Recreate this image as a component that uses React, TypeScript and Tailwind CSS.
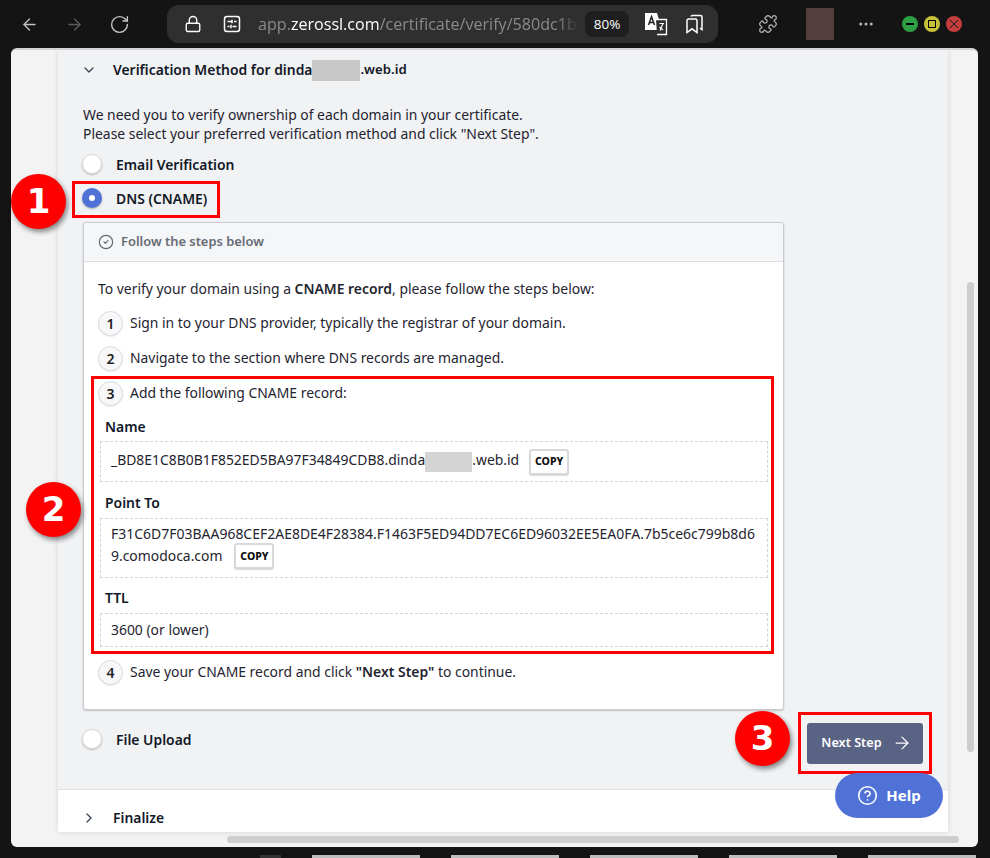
import { ArrowLeft, ArrowRight, ChevronDown, ChevronRight, CircleCheck, CircleHelp, Lock, MoreHorizontal, Puzzle, RotateCw } from "lucide-react"

const font = "font-['Noto_Sans',sans-serif]"

function Radio({ checked }: { checked?: boolean }) {
  return checked ? (
    <div className="w-5 h-5 rounded-full bg-[#4f72d6] shadow-[0_1px_2px_rgba(0,0,0,0.3)] flex items-center justify-center">
      <div className="w-[6px] h-[6px] rounded-full bg-white" />
    </div>
  ) : (
    <div className="w-5 h-5 rounded-full bg-white border border-[#dcdcdc] shadow-[0_1px_2px_rgba(0,0,0,0.25)]" />
  )
}

function MethodRow({ label, checked, className }: { label: string; checked?: boolean; className?: string }) {
  return (
    <div className={`flex items-center gap-[14px] ${className ?? ""}`}>
      <Radio checked={checked} />
      <span className="pt-[2px] text-[13.9px] font-semibold text-[#111827]">{label}</span>
    </div>
  )
}

function Step({ n, children, className }: { n: number; children: React.ReactNode; className?: string }) {
  return (
    <div className={`flex items-center gap-[7px] h-[25px] ${className ?? ""}`}>
      <div className="w-[25px] h-[25px] rounded-full bg-[#f8f8fa] border border-[#d9dbe0] shadow-[0_1px_1px_rgba(0,0,0,0.08)] flex items-center justify-center text-[14px] font-semibold text-[#222]">
        {n}
      </div>
      <span className="text-[13.92px] text-[#1f2430]">{children}</span>
    </div>
  )
}

function CopyButton({ className }: { className?: string }) {
  return (
    <span className={`inline-flex items-center justify-center shrink-0 w-10 h-[26px] rounded-[3px] bg-white border-2 border-[#d8d8dc] shadow-[0_1px_1px_rgba(0,0,0,0.15)] text-[10.5px] font-extrabold text-[#111] ${className ?? ""}`}>
      COPY
    </span>
  )
}

function Badge({ n, className }: { n: number; className: string }) {
  return (
    <div className={`absolute w-[55px] h-[55px] rounded-full bg-[#fe0000] shadow-[2px_3px_5px_rgba(0,0,0,0.45)] flex items-center justify-center text-white text-[34px] font-bold font-['DejaVu_Sans',sans-serif] ${className}`}>
      {n}
    </div>
  )
}

function BrowserBar() {
  return (
    <div className="h-[48px] shrink-0 flex items-center text-[#d8d8d8]">
      <ArrowLeft className="ml-[20px] w-[19px] h-[19px] text-[#c4c4c4]" strokeWidth={1.6} />
      <ArrowRight className="ml-[26px] w-[19px] h-[19px] text-[#5c5c5c]" strokeWidth={1.6} />
      <RotateCw className="ml-[25px] w-[21px] h-[21px] text-[#c4c4c4]" strokeWidth={1.6} />
      <div className="ml-[37px] w-[551px] h-[38px] rounded-[12px] bg-[#2f2f2f] flex items-center">
        <Lock className="ml-[17px] w-[18px] h-[18px] text-white" strokeWidth={1.8} />
        <svg className="ml-[21px] w-[18px] h-[18px]" viewBox="0 0 18 18" fill="none" stroke="#fff" strokeWidth="1.5">
          <rect x="1.5" y="1.5" width="15" height="15" rx="2.5" />
          <path d="M4.5 6.5h4M11 6.5h2.5M4.5 11.5h2M9.5 11.5h4M9 4.8v3.4M8 9.8v3.4" />
        </svg>
        <div className="ml-[17px] w-[320px] overflow-hidden whitespace-nowrap text-[16.1px] text-[#8a8a8a] font-['Open_Sans',sans-serif] [mask-image:linear-gradient(to_right,black_94%,transparent)]">
          app.<span className="text-white">zerossl.com</span>/certificate/verify/580dc1b
        </div>
        <div className="ml-[7px] w-[44px] h-[26px] rounded-[8px] bg-[#1e1e1e] flex items-center justify-center text-[13.5px] text-white font-['Open_Sans',sans-serif]">
          80%
        </div>
        <svg className="ml-[15px] w-[24px] h-[24px]" viewBox="0 0 24 24">
          <path d="M1 1h12l5 17H1z" fill="#fff" />
          <path d="M12 7.5h10.5v15H13" fill="#2f2f2f" stroke="#fff" strokeWidth="1.3" />
          <path d="M4.5 13L7.5 4.8L10.5 13M5.5 10.5h4" fill="none" stroke="#222" strokeWidth="1.5" />
          <path d="M15.5 11.5h4.5M19 11.5l-3 7M15.5 15l3.5 3" fill="none" stroke="#fff" strokeWidth="1.1" />
        </svg>
        <svg className="ml-[18px] w-[18px] h-[20px]" viewBox="0 0 18 20" fill="none" stroke="#fff" strokeWidth="1.5">
          <path d="M1 6.5a1.5 1.5 0 0 1 1.5-1.5h7A1.5 1.5 0 0 1 11 6.5V18.5L6 14.8L1 18.5z" />
          <path d="M5 2.5a1.5 1.5 0 0 1 1.3-1h8.2A1.5 1.5 0 0 1 16 3v12.5l-2-1.4" />
        </svg>
      </div>
      <Puzzle className="ml-[40px] w-[20px] h-[20px] text-[#b5b5b5]" strokeWidth={1.5} />
      <div className="ml-[28px] w-[28px] h-[32px] bg-[#543d3d]" />
      <MoreHorizontal className="ml-[23px] w-[18px] h-[18px] text-[#b5b5b5]" strokeWidth={2} />
      <div className="ml-[27px] flex items-center gap-[6px]">
        <div className="w-4 h-4 rounded-full bg-[#2ea043] flex items-center justify-center">
          <div className="w-2 h-[1.5px] bg-black" />
        </div>
        <div className="w-4 h-4 rounded-full bg-[#c9c23b] flex items-center justify-center">
          <div className="w-2 h-2 border border-black" />
        </div>
        <div className="w-4 h-4 rounded-full bg-[#c43d3d] flex items-center justify-center text-[#1b1b1b]">
          <svg className="w-2 h-2" viewBox="0 0 8 8" stroke="currentColor" strokeWidth="1">
            <path d="M0 0l8 8M8 0L0 8" />
          </svg>
        </div>
      </div>
    </div>
  )
}

function CnameBox() {
  return (
    <div className="ml-[25px] w-[701px] h-[488px] shrink-0 rounded-[3px] bg-white border border-[#c9cbd0] shadow-[0_1px_2px_rgba(0,0,0,0.2)] overflow-hidden">
      <div className="h-[39px] bg-[#f5f6f8] border-b border-[#dcdee2] flex items-center gap-[7px] px-[14px]">
        <CircleCheck className="w-4 h-4 text-[#666b75]" strokeWidth={1.8} />
        <span className="text-[12.9px] font-semibold text-[#666b75]">Follow the steps below</span>
      </div>
      <div className="pl-[14px] pr-[14px] pt-[17px] text-[13.92px] text-[#1f2430]">
        <p className="h-[20px] leading-[20px]">
          To verify your domain using a <b className="font-semibold">CNAME record</b>, please follow the steps below:
        </p>
        <Step n={1} className="mt-[12px]">Sign in to your DNS provider, typically the registrar of your domain.</Step>
        <Step n={2} className="mt-[10px]">Navigate to the section where DNS records are managed.</Step>
        <Step n={3} className="mt-[10px]">Add the following CNAME record:</Step>

        <div className="ml-[2px] w-[668px]">
          <div className="mt-[11px] pl-[5px] h-[20px] leading-[20px] font-semibold text-[#111827]">Name</div>
          <div className="mt-[4px] h-[41px] border border-dashed border-[#d4d4d4] pl-[10px] flex items-center">
            <span className="pb-[2px]">_BD8E1C8B0B1F852ED5BA97F34849CDB8.dinda</span>
            <span className="w-[47px] h-[20px] bg-[#d4d4d4]" />
            <span className="pb-[2px]">.web.id</span>
            <CopyButton className="ml-[10px]" />
          </div>
          <div className="mt-[11px] pl-[5px] h-[20px] leading-[20px] font-semibold text-[#111827]">Point To</div>
          <div className="mt-[5px] h-[60px] border border-dashed border-[#d4d4d4] px-[10px] pt-[4px] leading-[22px]">
            <div className="whitespace-nowrap text-[13.98px]">F31C6D7F03BAA968CEF2AE8DE4F28384.F1463F5ED94DD7EC6ED96032EE5EA0FA.7b5ce6c799b8d6</div>
            <div className="flex items-center h-[22px]">
              <span>9.comodoca.com</span>
              <CopyButton className="ml-[12px]" />
            </div>
          </div>
          <div className="mt-[10px] pl-[5px] h-[20px] leading-[20px] font-semibold text-[#111827]">TTL</div>
          <div className="mt-[5px] h-[34px] border border-dashed border-[#d4d4d4] pl-[10px] flex items-center">3600 (or lower)</div>
        </div>

        <Step n={4} className="mt-[13px]">
          <span>
            Save your CNAME record and click <b className="font-semibold">"Next Step"</b> to continue.
          </span>
        </Step>
      </div>
    </div>
  )
}

export default function App() {
  return (
    <div className={`relative w-[990px] h-[858px] overflow-hidden bg-[#141414] flex flex-col ${font}`}>
      <BrowserBar />

      {/* page window */}
      <div className="ml-[11px] w-[967px] h-[799px] shrink-0 rounded-[6px] border-t-2 border-[#d4d4d6] bg-[#f3f3f3] flex flex-col overflow-hidden">
        <div className="flex-1 min-h-0 flex">
          <div className="w-[47px] shrink-0" />
          <div className="w-[890px] shrink-0 flex flex-col shadow-[0_0_6px_rgba(0,0,0,0.12)]">
            <div className="h-[740px] shrink-0 bg-[#f1f2f4] border-b border-[#dfe1e5] flex flex-col">
              <div className="h-[40px] shrink-0 flex items-center pl-[23px] text-[13.9px] font-semibold text-[#111827]">
                <ChevronDown className="w-[16px] h-[16px] text-[#3d4658]" strokeWidth={2} />
                <span className="ml-[16px]">Verification Method for dinda</span>
                <span className="w-[48px] h-[21px] bg-[#c8c8c8]" />
                <span className="text-[13.2px]">.web.id</span>
              </div>
              <p className="mt-[15px] ml-[25px] text-[13.92px] leading-[19px] text-[#1f2430]">
                We need you to verify ownership of each domain in your certificate.
                <br />
                Please select your preferred verification method and click "Next Step".
              </p>
              <MethodRow label="Email Verification" className="mt-[11px] ml-[24px] h-5" />
              <MethodRow label="DNS (CNAME)" checked className="mt-[14px] ml-[24px] h-5" />
              <div className="h-[14px] shrink-0" />
              <CnameBox />
              <div className="flex items-start justify-between mt-[13px] ml-[24px] mr-[25px]">
                <MethodRow label="File Upload" className="mt-[6px] h-5" />
                <button className="w-[116px] h-[41px] pl-[3px] pb-[1px] rounded-[3px] bg-[#596384] text-white text-[12.7px] font-semibold flex items-center justify-center gap-[10px]">
                  Next Step
                  <ArrowRight className="w-5 h-5" strokeWidth={1.5} />
                </button>
              </div>
            </div>
            <div className="flex-1 bg-white flex items-start pt-[18px] pl-[23px] text-[13.9px] font-semibold text-[#111827]">
              <ChevronRight className="mt-[2px] w-[16px] h-[16px] text-[#3d4658]" strokeWidth={2} />
              <span className="ml-[16px]">Finalize</span>
            </div>
          </div>
          {/* vertical scrollbar */}
          <div className="flex-1 pl-[19px] pt-[232px]">
            <div className="w-[7px] h-[470px] rounded-full bg-[#cdcdcd]" />
          </div>
        </div>
        {/* horizontal scrollbar */}
        <div className="h-[15px] shrink-0 pl-[216px] pt-[4px]">
          <div className="w-[732px] h-[7px] rounded-full bg-[#cdcdcd]" />
        </div>
      </div>

      {/* what shows of the taskbar below the window */}
      <div className="mt-[8px] h-[3px] flex pl-[260px] gap-[31px]">
        <div className="w-[21px] bg-[#333]" />
        <div className="w-[108px] bg-[#bdbdbd]" />
        <div className="w-[108px] bg-[#bdbdbd]" />
        <div className="w-[108px] bg-[#bdbdbd]" />
        <div className="w-[108px] bg-[#bdbdbd]" />
        <div className="w-[108px] bg-[#bdbdbd]" />
      </div>

      {/* annotations */}
      <div className="absolute left-[72px] top-[181px] w-[148px] h-[37px] border-[3px] border-[#fe0000]" />
      <div className="absolute left-[91px] top-[376px] w-[683px] h-[278px] border-[3px] border-[#fe0000]" />
      <div className="absolute left-[798px] top-[712px] w-[134px] h-[62px] border-[3px] border-[#fe0000]" />
      <Badge n={1} className="left-[11px] top-[174px]" />
      <Badge n={2} className="left-[26px] top-[482px]" />
      <Badge n={3} className="left-[735px] top-[711px]" />

      <button className="absolute left-[835px] top-[773px] w-[108px] h-[45px] rounded-full bg-[#5072d6] text-white text-[15px] font-bold flex items-center justify-center gap-[8px]">
        <CircleHelp className="w-[21px] h-[21px]" strokeWidth={1.8} />
        Help
      </button>
    </div>
  )
}
